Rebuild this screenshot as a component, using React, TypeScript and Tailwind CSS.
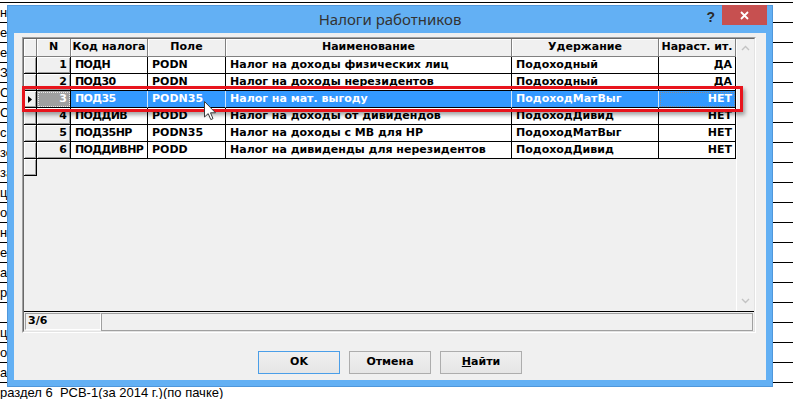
import React from "react";

const taxes = [
  { n: 1, code: "ПОДН", field: "PODN", name: "Налог на доходы физических лиц", hold: "Подоходный", acc: "ДА" },
  { n: 2, code: "ПОД30", field: "PODN", name: "Налог на доходы нерезидентов", hold: "Подоходный", acc: "ДА" },
  { n: 3, code: "ПОД35", field: "PODN35", name: "Налог на мат. выгоду", hold: "ПодоходМатВыг", acc: "НЕТ" },
  { n: 4, code: "ПОДДИВ", field: "PODD", name: "Налог на доходы от дивидендов", hold: "ПодоходДивид", acc: "НЕТ" },
  { n: 5, code: "ПОД35НР", field: "PODN35", name: "Налог на доходы с МВ для НР", hold: "ПодоходМатВыг", acc: "НЕТ" },
  { n: 6, code: "ПОДДИВНР", field: "PODD", name: "Налог на дивиденды для нерезидентов", hold: "ПодоходДивид", acc: "НЕТ" },
];

const sheetCells = ["н", "е", "е", "З", "С", "С", "с", "зе", "за", "ц.е", "оь", "н", "е", "а", "р", "", "ц.е", "ор", "а"];

const headers = [
  { label: "", w: "w-[13px]" },
  { label: "N", w: "w-[34px]" },
  { label: "Код налога", w: "w-[77px]" },
  { label: "Поле", w: "w-[78px]" },
  { label: "Наименование", w: "w-[286px]" },
  { label: "Удержание", w: "w-[147px]" },
  { label: "Нараст. ит.", w: "w-[77px]" },
];

const SELECTED = 3;

const fixedCell =
  "bg-[#f0f0f0] border-r border-b border-black shadow-[inset_1px_1px_0_#fff,inset_-1px_-1px_0_#a0a0a0]";

function Cell({ w, sel, tight, children }: { w: string; sel: boolean; tight?: boolean; children: React.ReactNode }) {
  return (
    <div
      className={`${w} h-full shrink-0 border-b border-r border-black flex items-center overflow-hidden whitespace-nowrap pl-[4px] ${
        sel ? "bg-[#3399ff] text-white border-r-[#cfe5fb]" : "bg-white"
      } ${tight ? "pl-[3px] tracking-[-0.6px]" : "pl-[4px]"}`}
    >
      {children}
    </div>
  );
}

function Chevron({ up }: { up?: boolean }) {
  return (
    <svg width="9" height="6" viewBox="0 0 9 6" className="mx-auto">
      <polyline
        points={up ? "1,5 4.5,1.5 8,5" : "1,1 4.5,4.5 8,1"}
        fill="none"
        stroke="#c3c3c3"
        strokeWidth="1.4"
      />
    </svg>
  );
}

function Button({ children, primary }: { children: React.ReactNode; primary?: boolean }) {
  return (
    <div
      className={`w-[82px] h-[23px] flex items-center justify-center border text-[11px] font-bold bg-gradient-to-b from-[#f0f0f0] to-[#e5e5e5] ${
        primary ? "border-[#4a9ee8]" : "border-[#adadad]"
      }`}
    >
      {children}
    </div>
  );
}

export default function App() {
  return (
    <div className="relative w-[793px] h-[399px] overflow-hidden bg-white text-black font-['Liberation_Sans',Arial,sans-serif]">
      {/* sheet behind the dialog */}
      <div className="pt-[2px]">
        <div className="border-t border-black">
          {sheetCells.map((t, i) => (
            <div key={i} className="h-[20px] border-b border-black flex items-center text-[13px] leading-none">
              {t}
            </div>
          ))}
        </div>
        <div className="pt-[2px] text-[13px] leading-[15px] whitespace-pre">раздел 6  РСВ-1(за 2014 г.)(по пачке)</div>
      </div>

      {/* dialog window */}
      <div className="absolute left-[7px] top-[5px] w-[766px] h-[382px] bg-[#63b0f4] border border-[#4f97db] flex flex-col">
        <div className="h-[27px] grid grid-cols-[1fr_auto_1fr] items-start">
          <div />
          <div className="pt-[3px] font-['Noto_Sans',sans-serif] text-[15px] leading-[20px] text-[#333]">
            Налоги работников
          </div>
          <div className="flex justify-end items-start pr-[5px]">
            <span className="mt-[2px] mr-[7px] text-[14px] font-bold text-[#2b2b2b] leading-[18px]">?</span>
            <div className="-mt-[1px] w-[45px] h-[20px] bg-[#c75050] flex items-center justify-center">
              <svg width="9" height="9" viewBox="0 0 9 9">
                <path d="M1 1 L8 8 M8 1 L1 8" stroke="#fff" strokeWidth="1.8" />
              </svg>
            </div>
          </div>
        </div>

        <div className="mx-[6px] mb-[6px] flex-1 bg-[#f0f0f0] pt-[4px] pl-[8px] flex flex-col font-['DejaVu_Sans',sans-serif]">
          {/* grid frame */}
          <div className="w-[734px] h-[296px] border border-t-[#a0a0a0] border-l-[#a0a0a0] border-r-white border-b-white">
            <div className="w-full h-full border border-t-[#696969] border-l-[#696969] border-r-[#e3e3e3] border-b-[#e3e3e3] flex flex-col text-[11px] font-bold">
              <div className="h-[274px] border-b border-black flex">
                <div className="w-[712px] flex flex-col">
                  <div className="h-[18px] flex">
                    {headers.map((h, i) => (
                      <div
                        key={i}
                        className={`${h.w} h-full shrink-0 bg-[#f0f0f0] border-r border-b border-[#808080] shadow-[inset_1px_1px_0_#fff] flex items-center justify-center whitespace-nowrap`}
                      >
                        {h.label}
                      </div>
                    ))}
                  </div>
                  {taxes.map((r) => {
                    const sel = r.n === SELECTED;
                    return (
                      <div key={r.n} className="h-[17px] flex">
                        <div className={`w-[13px] h-full shrink-0 flex items-center pl-[4px] ${fixedCell}`}>
                          {sel && (
                            <svg width="4" height="7" viewBox="0 0 4 7">
                              <path d="M0 0 L4 3.5 L0 7 Z" fill="#000" />
                            </svg>
                          )}
                        </div>
                        <div
                          className={`w-[34px] h-full shrink-0 flex items-center justify-end pr-[3px] ${
                            sel
                              ? "bg-[#a0a0a0] text-white border-r border-b border-black outline-1 outline-dotted outline-[#e8e8e8] -outline-offset-2"
                              : fixedCell
                          }`}
                        >
                          {r.n}
                        </div>
                        <Cell w="w-[77px]" sel={sel} tight>{r.code}</Cell>
                        <Cell w="w-[78px]" sel={sel}>{r.field}</Cell>
                        <Cell w="w-[286px]" sel={sel}>{r.name}</Cell>
                        <Cell w="w-[147px]" sel={sel}>{r.hold}</Cell>
                        <div
                          className={`w-[77px] h-full shrink-0 border-b border-r border-black flex items-center justify-end pr-[3px] ${
                            sel ? "bg-[#3399ff] text-white outline-1 outline-dotted outline-[#8a8a8a] -outline-offset-2" : "bg-white"
                          }`}
                        >
                          {r.acc}
                        </div>
                      </div>
                    );
                  })}
                  <div className={`w-[13px] h-[17px] ${fixedCell}`} />
                </div>
                {/* scrollbar */}
                <div className="flex-1 border-l border-white flex flex-col justify-between pt-[6px] pb-[7px]">
                  <Chevron up />
                  <Chevron />
                </div>
              </div>
              {/* status bar */}
              <div className="flex-1 flex pt-[1px] px-[1px]">
                <div className="w-[76px] h-[17px] border border-t-[#a0a0a0] border-l-[#a0a0a0] border-r-white border-b-white flex items-center pl-[2px]">
                  3/6
                </div>
                <div className="flex-1 h-[18px] border border-[#a0a0a0]" />
              </div>
            </div>
          </div>

          <div className="mt-[18px] -ml-[8px] flex justify-center gap-[9px]">
            <Button primary>OK</Button>
            <Button>Отмена</Button>
            <Button>
              <span className="underline">Н</span>айти
            </Button>
          </div>
        </div>
      </div>

      {/* highlight marking the selected row */}
      <div className="absolute left-[22px] top-[86px] w-[721px] h-[26px] border-[3px] border-[#e8141c] shadow-[2px_3px_4px_rgba(0,0,0,0.35)]" />

      {/* mouse pointer */}
      <svg className="absolute left-[204px] top-[101px]" width="13" height="20" viewBox="0 0 13 20">
        <path d="M0.5 0.5 L0.5 16 L4.2 12.6 L6.8 18.6 L9 17.6 L6.5 11.8 L11.5 11.8 Z" fill="#fff" stroke="#3a3a3a" strokeWidth="1" />
      </svg>
    </div>
  );
}
